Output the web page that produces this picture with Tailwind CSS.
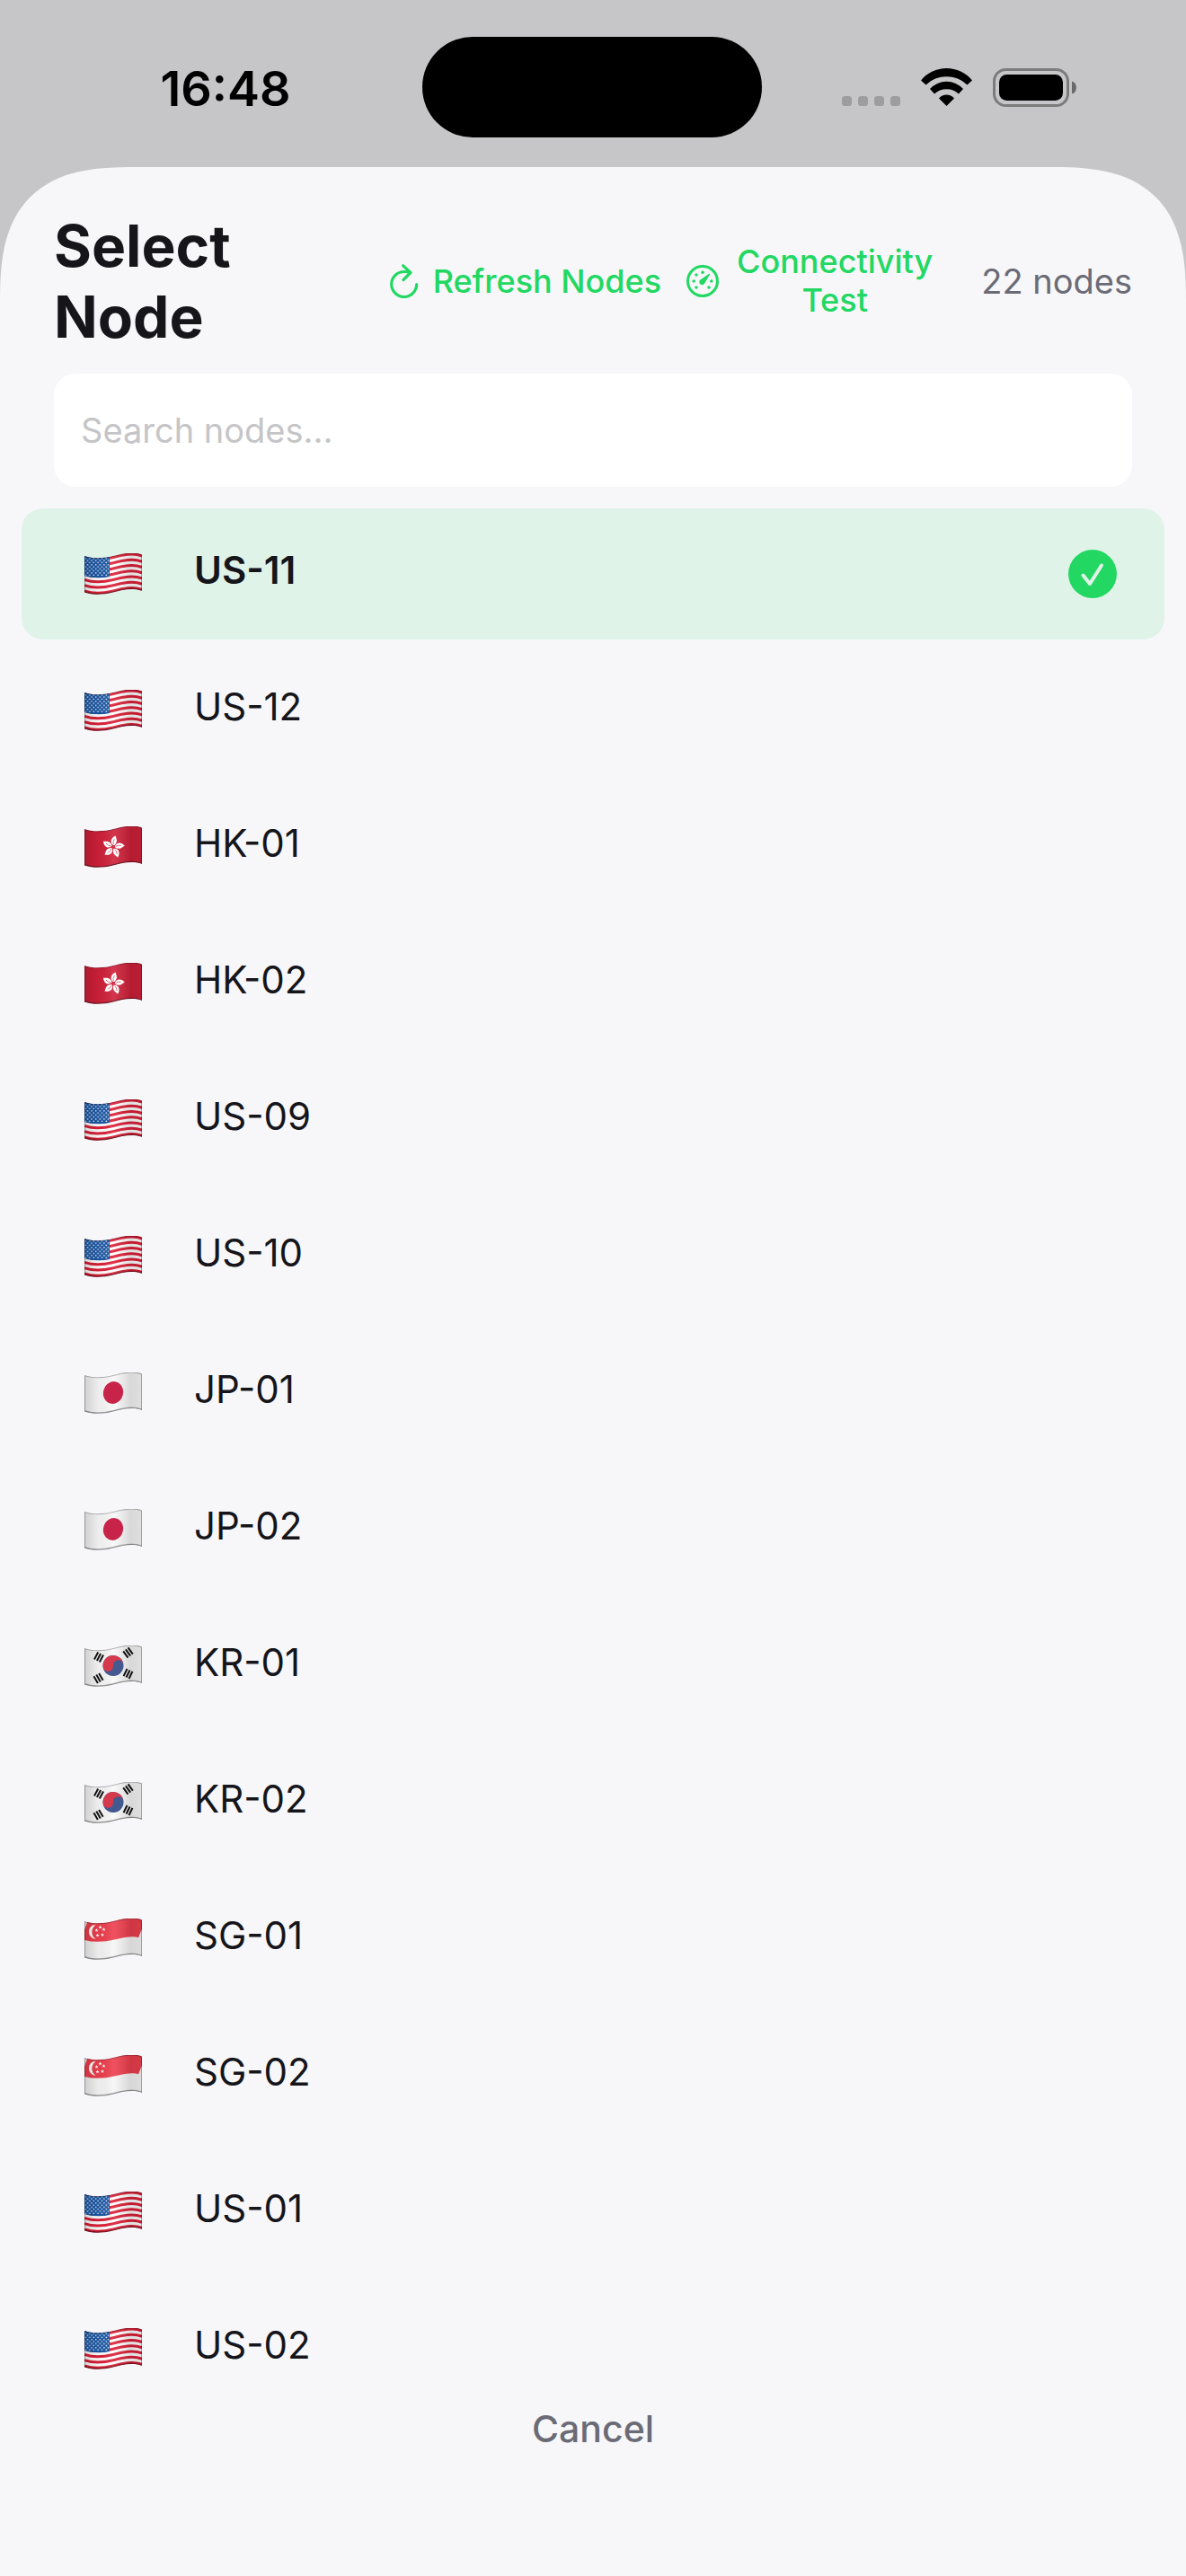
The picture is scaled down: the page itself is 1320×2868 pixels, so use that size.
<!DOCTYPE html>
<html lang="en">
<head>
    <meta charset="UTF-8">
    <meta name="viewport" content="width=device-width, initial-scale=1.0">
    <title>Select Node</title>
    <script src="https://cdn.jsdelivr.net/npm/@tailwindcss/browser@4"></script>
</head>
<body class="bg-[#c6c6c8] font-[Inter,sans-serif] text-[#15151a]">
    <!-- Flag artwork shared by the rows -->
    <svg class="absolute size-0" aria-hidden="true">
        <defs>
            <path id="cloth" d="M0 3C10 6.5 22 5.5 32 3S54 -2.5 64 1.5V42C54 38 42 41 32 43.5S10 47 0 43.5Z"/>
            <path id="wave" d="M0 3C10 6.5 22 5.5 32 3S54 -2.5 64 1.5"/>
            <clipPath id="clothClip"><use href="#cloth"/></clipPath>
            <linearGradient id="shade" x1="0" x2="1" y1="0" y2="0">
                <stop offset="0" stop-color="#000" stop-opacity=".16"/>
                <stop offset=".25" stop-color="#000" stop-opacity=".04"/>
                <stop offset=".5" stop-color="#fff" stop-opacity=".1"/>
                <stop offset=".8" stop-color="#000" stop-opacity=".13"/>
                <stop offset="1" stop-color="#000" stop-opacity=".1"/>
            </linearGradient>
            <pattern id="stars" width="4.6" height="4.6" patternUnits="userSpaceOnUse">
                <circle cx="1.2" cy="1.2" r=".8" fill="#fff"/>
                <circle cx="3.5" cy="3.5" r=".8" fill="#fff"/>
            </pattern>
            <g id="finish">
                <use href="#cloth" fill="url(#shade)"/>
                <use href="#cloth" fill="none" stroke="#000" stroke-opacity=".28" stroke-width="2"/>
                <use href="#wave" y="40" fill="none" stroke="#000" stroke-opacity=".2" stroke-width="2"/>
            </g>
            <path id="petal" d="M0 -2C-4.5 -4 -4.5 -9.5 1 -12.8C1.5 -10 4 -8 2.5 -5C2 -3 1 -2 0 -2Z"/>
            <path id="star" d="M0 -2L.6 -.6L2 -.5L.9 .4L1.3 1.9L0 1L-1.3 1.9L-.9 .4L-2 -.5L-.6 -.6Z"/>
            <path id="bars" d="M-3.3 -4.5V4.5M0 -4.5V4.5M3.3 -4.5V4.5" stroke="#111" stroke-width="2"/>
        </defs>
        <symbol id="flag-us" viewBox="0 0 64 46">
            <g clip-path="url(#clothClip)">
                <use href="#cloth" fill="#fff"/>
                <g fill="none" stroke="#dd1f37" stroke-width="3.1">
                    <use href="#wave" y="1.5"/>
                    <use href="#wave" y="7.7"/>
                    <use href="#wave" y="14"/>
                    <use href="#wave" y="20.2"/>
                    <use href="#wave" y="26.4"/>
                    <use href="#wave" y="32.7"/>
                    <use href="#wave" y="39"/>
                </g>
                <path d="M0 0H28V26C18 28 8 27.5 0 25Z" fill="#1a57a6"/>
                <path d="M1 5H27V25H1Z" fill="url(#stars)"/>
                <use href="#finish"/>
            </g>
        </symbol>
        <symbol id="flag-hk" viewBox="0 0 64 46">
            <g clip-path="url(#clothClip)">
                <use href="#cloth" fill="#cf2039"/>
                <use href="#finish"/>
                <g transform="translate(32 23)" fill="#fff">
                    <use href="#petal" transform="rotate(8)"/>
                    <use href="#petal" transform="rotate(80)"/>
                    <use href="#petal" transform="rotate(152)"/>
                    <use href="#petal" transform="rotate(224)"/>
                    <use href="#petal" transform="rotate(296)"/>
                </g>
                <g transform="translate(32 23)" fill="none" stroke="#cf2039" stroke-width=".6">
                    <path d="M0 -3Q-1.500 -5 0 -9" transform="rotate(8)"/>
                    <path d="M0 -3Q-1.500 -5 0 -9" transform="rotate(80)"/>
                    <path d="M0 -3Q-1.500 -5 0 -9" transform="rotate(152)"/>
                    <path d="M0 -3Q-1.500 -5 0 -9" transform="rotate(224)"/>
                    <path d="M0 -3Q-1.500 -5 0 -9" transform="rotate(296)"/>
                </g>
            </g>
        </symbol>
        <symbol id="flag-jp" viewBox="0 0 64 46">
            <g clip-path="url(#clothClip)">
                <use href="#cloth" fill="#f8f8f8"/>
                <use href="#finish"/>
                <ellipse cx="32" cy="22.5" rx="11" ry="12.5" transform="rotate(15 32 22.5)" fill="#c8244a"/>
            </g>
        </symbol>
        <symbol id="flag-kr" viewBox="0 0 64 46">
            <g clip-path="url(#clothClip)">
                <use href="#cloth" fill="#f8f8f8"/>
                <use href="#finish"/>
                <g transform="translate(32 22.5) rotate(-6)">
                    <circle r="11.5" fill="#44598f"/>
                    <path d="M-11.5 0A11.5 11.5 0 0 1 11.5 0A5.75 5.75 0 0 0 0 0A5.75 5.75 0 0 1 -11.5 0Z" fill="#d53a4c"/>
                </g>
                <use href="#bars" transform="translate(16 13) rotate(28)"/>
                <use href="#bars" transform="translate(48.5 8) rotate(-36)"/>
                <use href="#bars" transform="translate(15.5 36.5) rotate(-30)"/>
                <use href="#bars" transform="translate(48.5 31.5) rotate(26)"/>
            </g>
        </symbol>
        <symbol id="flag-sg" viewBox="0 0 64 46">
            <g clip-path="url(#clothClip)">
                <use href="#cloth" fill="#f6f6f6"/>
                <use href="#wave" y="10" fill="none" stroke="#ee3f4e" stroke-width="21"/>
                <path d="M12.5 7C3 7 2 21 12.5 23C7 19 7 11 12.5 7Z" fill="#fff"/>
                <g fill="#fff">
                    <use href="#star" x="17.5" y="9.5"/>
                    <use href="#star" x="13.5" y="13"/>
                    <use href="#star" x="21.5" y="12"/>
                    <use href="#star" x="14.5" y="18.5"/>
                    <use href="#star" x="20" y="18"/>
                </g>
                <use href="#finish"/>
            </g>
        </symbol>
    </svg>

    <div class="flex h-screen flex-col">
        <!-- Status bar -->
        <div class="flex h-[186px] shrink-0 items-center pt-2 text-black">
            <div class="flex-1 pt-0.5 pl-8 text-center text-[54px] font-semibold">16:48</div>
            <div class="h-28 w-[378px] rounded-full bg-black"></div>
            <div class="flex flex-1 items-center justify-center pr-[34px]">
                <svg class="mr-[23px] h-[42px] w-[65px]" viewBox="0 0 65 42" fill="#9d9d9f">
                    <rect x="0" y="31" width="11" height="11" rx="3.5"/>
                    <rect x="18" y="31" width="11" height="11" rx="3.5"/>
                    <rect x="36" y="31" width="11" height="11" rx="3.5"/>
                    <rect x="54" y="31" width="11" height="11" rx="3.5"/>
                </svg>
                <svg class="mr-[23px] h-[42px] w-[57px]" viewBox="0 0 57 42">
                    <path d="M0 13.5A37 37 0 0 1 57 13.5L51.5 18.5A33 33 0 0 0 5.5 18.5Z"/>
                    <path d="M10 23A25 25 0 0 1 47 23L42 28.5A20 20 0 0 0 15 28.5Z"/>
                    <path d="M20 33.5A11 11 0 0 1 37 33.5L28.5 42Z"/>
                </svg>
                <svg class="h-[43px] w-[93px]" viewBox="0 0 93 43">
                    <rect x="1.5" y="1.5" width="82" height="40" rx="13" fill="none" stroke="#7b7b7c" stroke-width="3"/>
                    <rect x="7" y="7" width="71" height="29" rx="8.5"/>
                    <path d="M88 14.5C94.500 16 94.500 27 88 28.500Z" fill="#69696a"/>
                </svg>
            </div>
        </div>

        <!-- Sheet -->
        <main class="flex min-h-0 flex-1 flex-col rounded-t-[114px] bg-[#f7f7fa] supports-[corner-shape:squircle]:rounded-t-[150px] supports-[corner-shape:squircle]:[corner-shape:superellipse(1.45)]">
            <header class="flex items-center px-15 pt-12 pb-6">
                <h1 class="mr-auto w-min text-[64px] leading-[79px] font-bold">Select Node</h1>
                <button type="button" class="flex items-center gap-4 text-[36px] leading-[43px] font-medium text-[#22d862]">
                    <svg class="h-[38px] w-8" viewBox="0 0 32 38" fill="none" stroke="currentColor" stroke-width="3.2" stroke-linecap="round" stroke-linejoin="round">
                        <path d="M29.7 22.5A14 14 0 1 1 15.6 8.5Q19.5 8.5 23 9.5M14.7 1.8L23 9.5L15 17.5"/>
                    </svg>
                    Refresh Nodes
                </button>
                <button type="button" class="ml-7 flex items-center gap-5 text-[36px] leading-[43px] font-medium text-[#22d862]">
                    <svg class="size-9" viewBox="0 0 36 36" fill="currentColor">
                        <circle cx="18" cy="18" r="16.5" fill="none" stroke="currentColor" stroke-width="3"/>
                        <circle cx="18" cy="8.2" r="1.8"/>
                        <circle cx="11" cy="11" r="1.8"/>
                        <circle cx="8.2" cy="18" r="1.8"/>
                        <circle cx="27.8" cy="18" r="1.8"/>
                        <circle cx="11" cy="25" r="1.8"/>
                        <circle cx="25" cy="25" r="1.8"/>
                        <path d="M26.3 10.2L20.5 20A3.2 3.2 0 1 1 15.8 16.3L25.6 9.6Z"/>
                    </svg>
                    <span class="w-min">Connectivity Test</span>
                </button>
                <p class="ml-[54px] text-[38px] whitespace-nowrap text-[#6b6b76]">22 nodes</p>
            </header>

            <div class="px-15">
                <input type="search" id="nodeSearch" aria-label="Search nodes" placeholder="Search nodes..." class="h-[126px] w-full rounded-3xl bg-white px-[30px] text-[38px] placeholder:text-[#c5c5c7] focus:outline-none">
            </div>

            <div id="nodeList" class="mt-6 flex min-h-0 flex-1 flex-col gap-1.5 overflow-hidden px-6"></div>

            <footer class="flex h-[222px] shrink-0 items-start justify-center pt-8">
                <button type="button" class="px-6 text-[41px] leading-[52px] font-medium text-[#6b6b76]">Cancel</button>
            </footer>
        </main>
    </div>

    <script>
        const nodes = ['US-11', 'US-12', 'HK-01', 'HK-02', 'US-09', 'US-10', 'JP-01', 'JP-02', 'KR-01', 'KR-02', 'SG-01', 'SG-02', 'US-01', 'US-02'];
        const selected = 'US-11';

        const check = `
            <svg class="ml-auto size-[54px]" viewBox="0 0 54 54" fill="none">
                <circle cx="27" cy="27" r="27" fill="#22d862"/>
                <path d="M16.5 28.5L24 38L37 17.5" stroke="#e0f3e9" stroke-width="4" stroke-linecap="round" stroke-linejoin="round"/>
            </svg>`;

        document.getElementById('nodeList').innerHTML = nodes.map(name => {
            const active = name === selected;
            const country = name.split('-')[0].toLowerCase();
            return `
                <button type="button" class="flex h-[146px] shrink-0 items-center rounded-3xl pr-[53px] pl-[70px] text-left text-[42px] ${active ? 'bg-[#e0f3e9] font-semibold' : ''}">
                    <svg class="mr-[58px] h-[46px] w-16"><use href="#flag-${country}"/></svg>
                    <span class="pb-2.5">${name}</span>
                    ${active ? check : ''}
                </button>`;
        }).join('');
    </script>
</body>
</html>
